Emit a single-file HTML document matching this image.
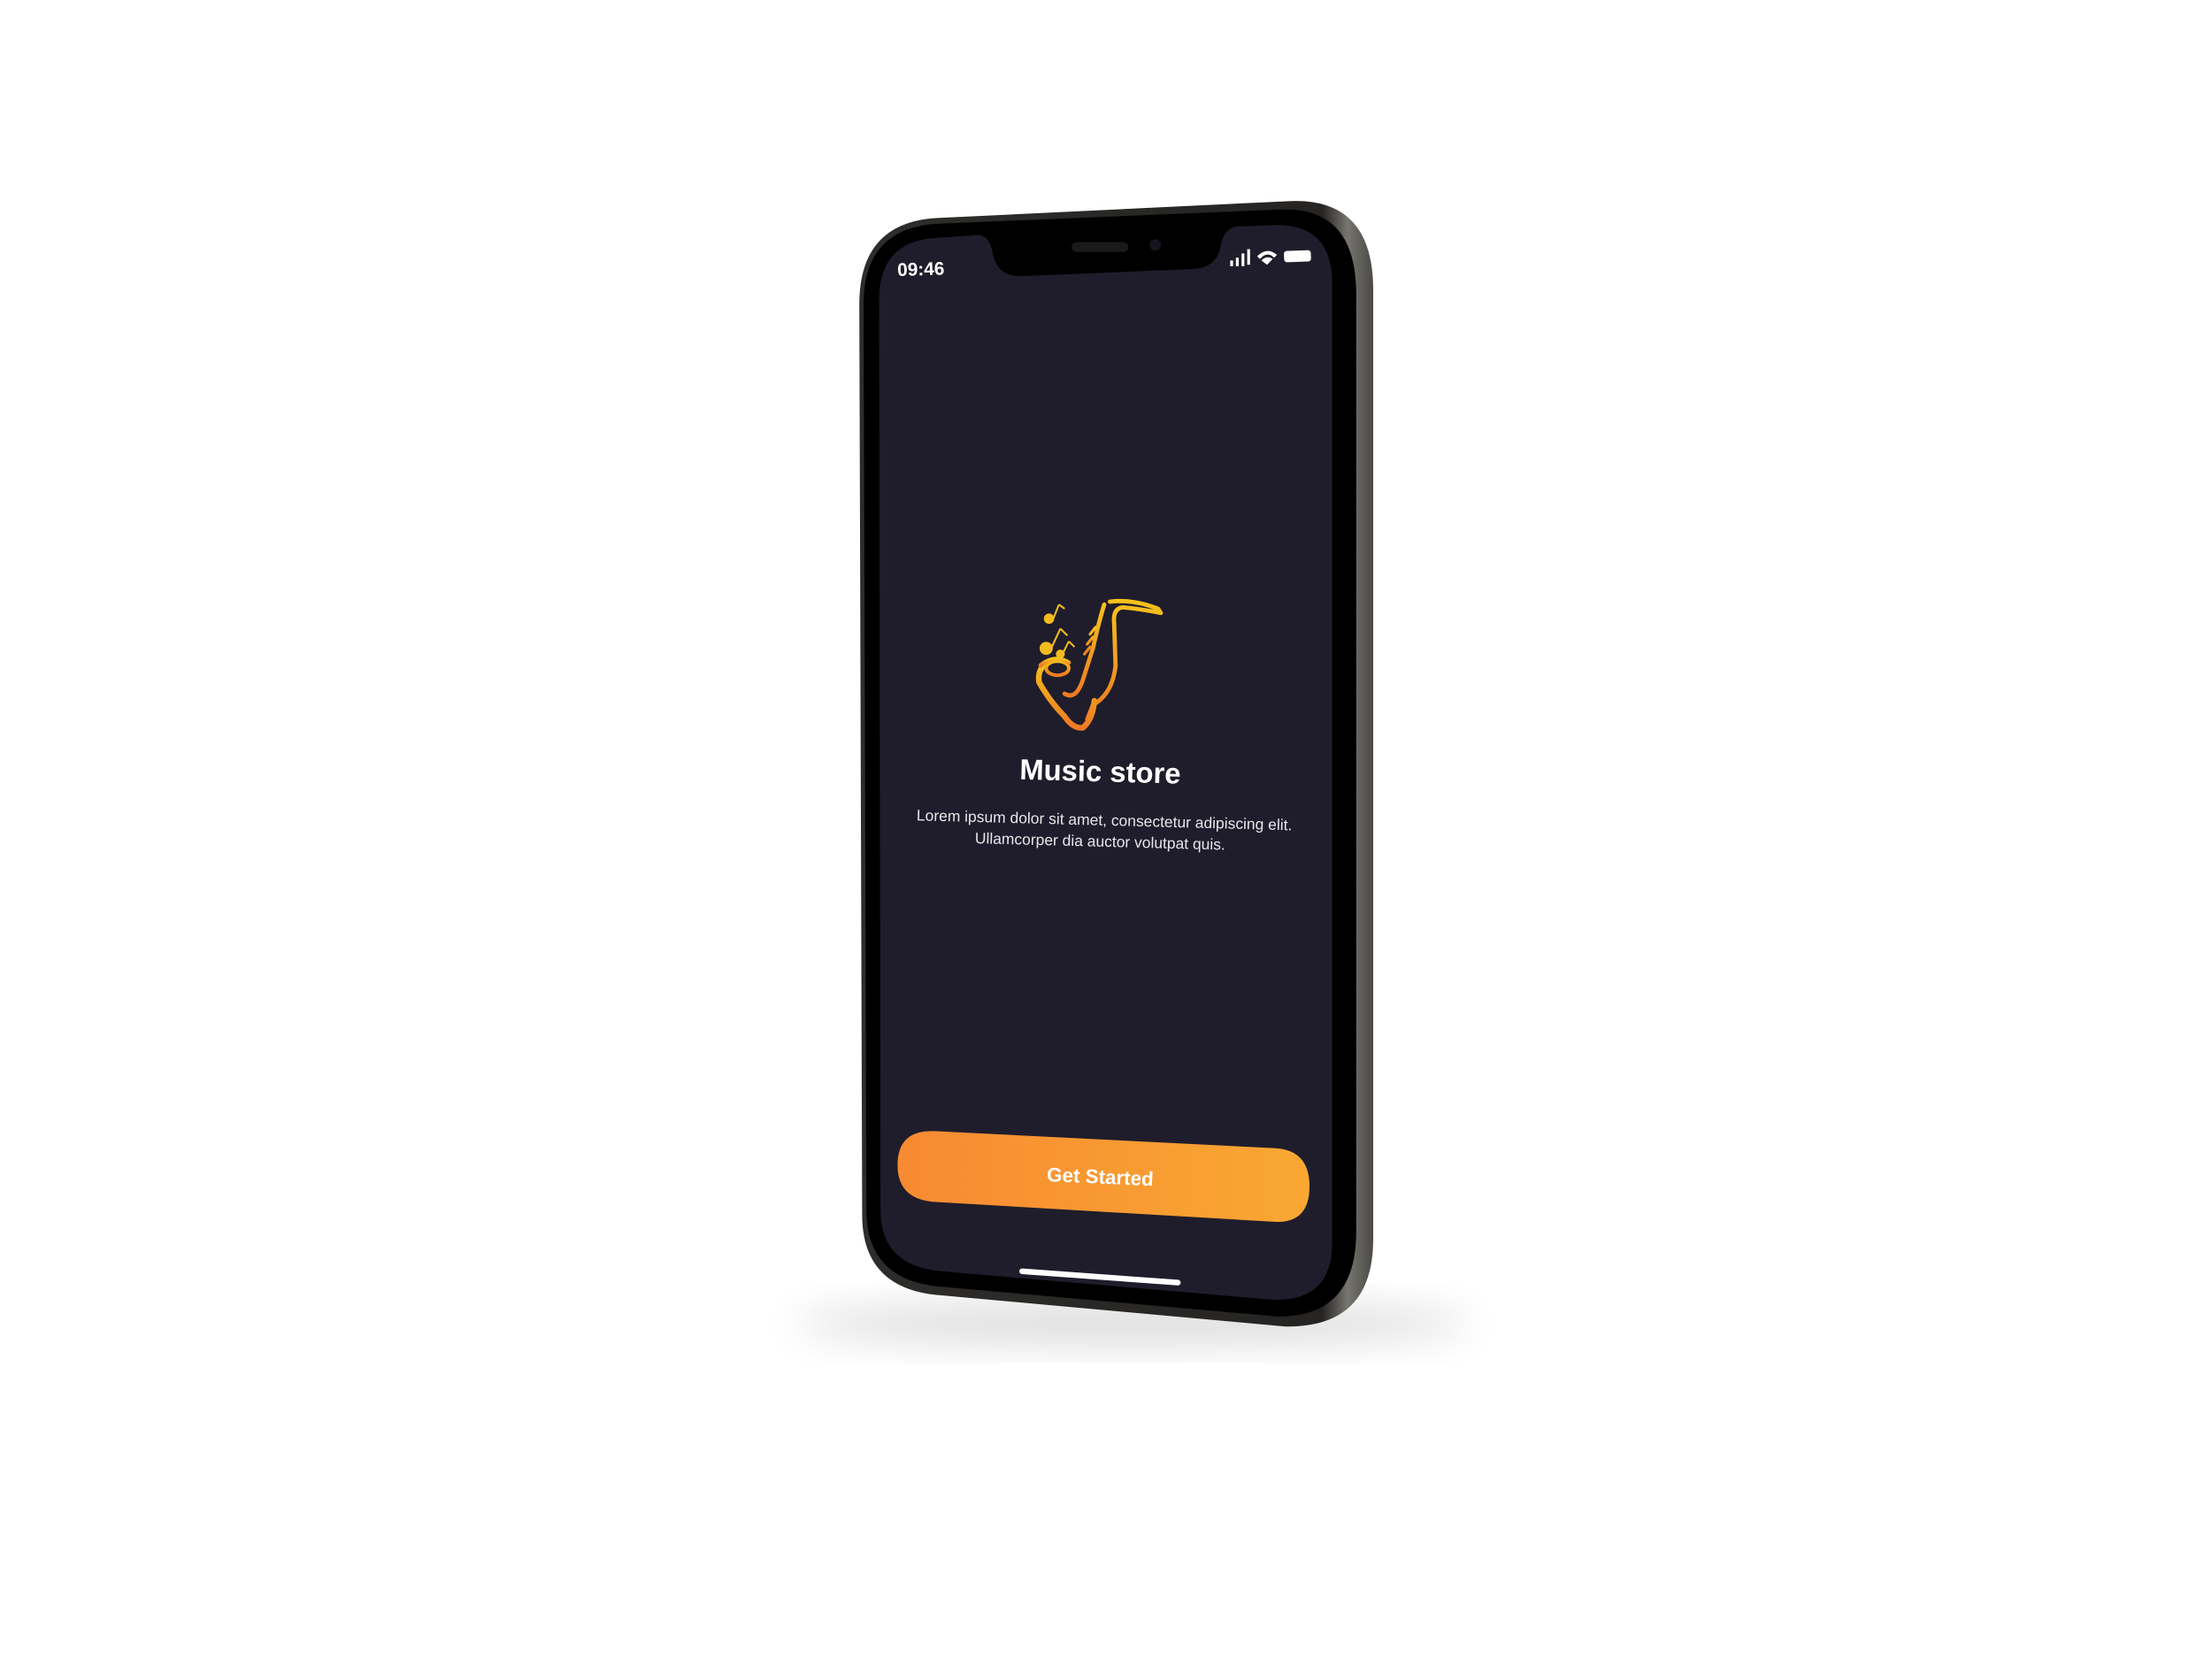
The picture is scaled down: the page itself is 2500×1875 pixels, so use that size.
<!DOCTYPE html>
<html><head><meta charset="utf-8">
<style>
html,body{margin:0;padding:0;background:#fff;width:2500px;height:1875px;overflow:hidden}
svg{display:block}
text{font-family:"Liberation Sans",sans-serif}
</style></head>
<body>
<svg width="2500" height="1875" viewBox="0 0 1562.5 1171.875" xmlns="http://www.w3.org/2000/svg">
<defs>
<linearGradient id="btn" x1="0" y1="0" x2="1" y2="0">
<stop offset="0" stop-color="#f78a32"/><stop offset="1" stop-color="#f9a832"/>
</linearGradient>
<linearGradient id="sax" x1="0" y1="0" x2="0" y2="1">
<stop offset="0" stop-color="#f5c21c"/><stop offset="1" stop-color="#ee7a22"/>
</linearGradient>
<linearGradient id="frame" x1="0" y1="0" x2="1" y2="0">
<stop offset="0" stop-color="#2e2d2b"/><stop offset="0.9" stop-color="#252422"/><stop offset="0.95" stop-color="#77756f"/><stop offset="1" stop-color="#4a4945"/>
</linearGradient>
<filter id="blur" x="-50%" y="-50%" width="200%" height="200%"><feGaussianBlur stdDeviation="14"/></filter>
</defs>
<ellipse cx="800" cy="935" rx="240" ry="14" fill="#000" opacity="0.15" filter="url(#blur)"/>
<!-- body -->
<path d="M662,154 L912,142 Q970,140 970,205 L970,875 Q970,938 908,937 L665,915 Q609,911 609,858 L607,215 Q607,157 662,154 Z" fill="url(#frame)"/>
<path d="M664,158 L905,148 Q958,146 958,208 L958,870 Q958,930 903,930 L666,909 Q612,905 612,855 L610,215 Q610,160 664,158 Z" fill="#000"/>
<!-- screen -->
<path d="M662,168 L690,166 Q699,166 701,178 Q704,196 722,195 L843,190 Q859,189 862,175 Q864,161 874,160 L900,159 Q941,158 941,200 L941,878 Q941,920 898,918 L665,898 Q622,894 622,855 L621,212 Q621,170 662,168 Z" fill="#1f1d2b"/>
<rect x="757" y="171" width="40" height="7" rx="3.5" fill="#1a1a1a"/>
<circle cx="816" cy="173" r="4" fill="#151520"/>
<!-- status -->
<text x="634" y="195" font-size="13" font-weight="bold" fill="#fff" transform="rotate(-1.8 634 195)">09:46</text>
<g fill="#fff">
<rect x="869" y="184" width="2" height="4"/><rect x="873" y="182" width="2" height="6"/><rect x="877" y="179" width="2" height="9"/><rect x="881" y="176" width="2" height="11"/>
<path d="M888,181 Q895,174 902,180 L900,182 Q895,177 890,183 Z M891,184 Q895,180 899,183 L895,187 Z"/>
<rect x="907" y="177" width="19" height="8" rx="2" transform="rotate(-2 916 181)"/>
</g>
<!-- saxophone -->
<g fill="none" stroke="url(#sax)" stroke-linecap="round" stroke-linejoin="round">
<path d="M784,425 Q800,423 818,430 L820,433 Q805,430 793,429 Q786,430 787,440 L788,470 Q786,490 772,498 L768,508" stroke-width="3"/>
<path d="M780,427 Q776,440 772,458 L765,480 Q760,495 752,490" stroke-width="3"/>
<path d="M745,466 Q732,470 734,482 Q742,496 752,506 Q758,515 765,514 Q772,508 773,495" stroke-width="4"/>
<ellipse cx="747" cy="472" rx="8" ry="5" stroke-width="2.5"/>
<path d="M735,470 Q745,462 755,468" stroke-width="3"/>
<path d="M774,443 L770,448 M772,450 L768,455 M770,457 L766,462" stroke-width="2"/>
</g>
<g fill="#f2bc1e" stroke="#f2bc1e" stroke-width="1.3">
<circle cx="741" cy="437" r="3"/><line x1="744" y1="437" x2="748" y2="427"/><line x1="748" y1="427" x2="752" y2="430"/>
<circle cx="739" cy="458" r="4"/><line x1="743" y1="457" x2="749" y2="444"/><line x1="749" y1="444" x2="754" y2="449"/>
<circle cx="749" cy="462" r="2.5"/><line x1="751" y1="461" x2="755" y2="453"/><line x1="755" y1="453" x2="759" y2="457"/>
</g>
<!-- text -->
<text x="777" y="552" font-size="20.5" font-weight="bold" fill="#fff" text-anchor="middle" transform="rotate(1.5 777 552)">Music store</text>
<text x="780" y="583" font-size="10.9" fill="#e6e6ea" text-anchor="middle" transform="rotate(1.5 780 583)">Lorem ipsum dolor sit amet, consectetur adipiscing elit.</text>
<text x="777" y="598" font-size="10.9" fill="#e6e6ea" text-anchor="middle" transform="rotate(1.5 777 598)">Ullamcorper dia auctor volutpat quis.</text>
<!-- button -->
<path d="M660,799 L900,811 Q925,812 925,838 Q925,865 899,863 L660,849 Q634,847 634,823 Q634,798 660,799 Z" fill="url(#btn)"/>
<text x="777" y="836" font-size="14" font-weight="bold" fill="#fff" text-anchor="middle" transform="rotate(2.5 777 836)">Get Started</text>
<!-- home bar -->
<line x1="722" y1="898" x2="832" y2="906" stroke="#fff" stroke-width="4" stroke-linecap="round"/>
</svg>
</body></html>
